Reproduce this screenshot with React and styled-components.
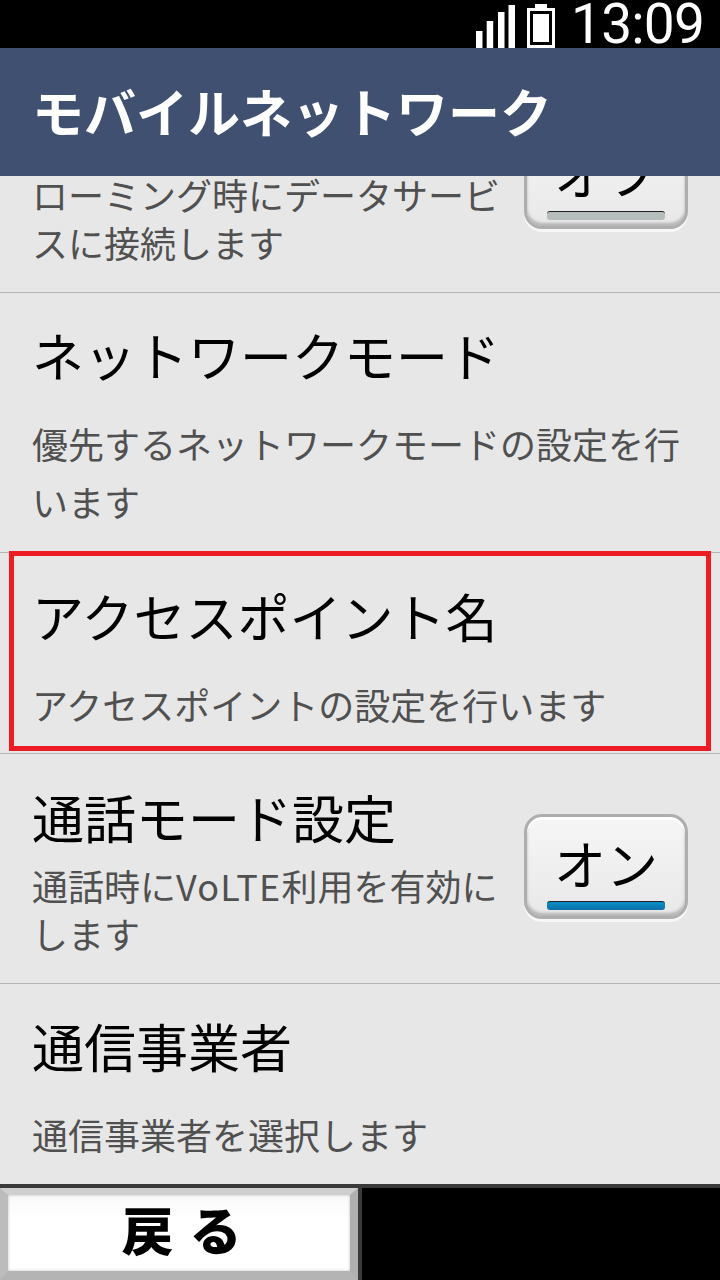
import React from "react";
import styled, { createGlobalStyle } from "styled-components";

const Global = createGlobalStyle`
  html, body { margin: 0; padding: 0; background: #000; }
  body { font-family: "Noto Sans CJK JP", "Noto Sans", sans-serif; }
`;
const Screen = styled.div`
  width: 720px; height: 1280px; display: flex; flex-direction: column; overflow: hidden; background: #e7e7e7;
`;
const StatusBar = styled.div`
  height: 48px; flex: none; background: #000; color: #fff; display: flex; align-items: center; justify-content: flex-end; padding-right: 16px;
`;
const Clock = styled.span`
  font-family: Roboto, "Liberation Sans", sans-serif; font-size: 55px; line-height: 48px; letter-spacing: -0.8px; font-weight: 400; margin-left: 16px;
`;
const Header = styled.header`
  height: 128px; flex: none; box-sizing: border-box; background: #3f5070; color: #fff; display: flex; align-items: center; padding: 0 0 4px 32px; font-size: 52px; font-weight: 700; position: relative; z-index: 2;
`;
const List = styled.div`
  flex: 1; overflow: hidden; min-height: 0;
`;
const Row = styled.div`
  position: relative; box-sizing: border-box; height: ${p => p.$h}px; margin-top: ${p => p.$mt || 0}px; padding: ${p => p.$pt || 0}px 32px 0 32px; border-bottom: 1px solid #b4b4b4;
  display: flex; justify-content: space-between;
  ${p => p.$marked ? `&::after { content: ""; position: absolute; left: 9px; top: -2px; width: 702px; height: 200px; border: 5px solid #ed1c24; box-sizing: border-box; }` : ""}
`;
const TextCol = styled.div`
  display: flex; flex-direction: column; min-width: 0; flex: 1;
`;
const Title = styled.div`
  font-size: 52px; line-height: ${p => p.$lh}px; color: #000; white-space: nowrap;
`;
const Sub = styled.div`
  font-size: 36px; line-height: ${p => p.$lh}px; color: #505050; margin-top: ${p => p.$mt || 0}px; width: ${p => p.$w || 660}px;
`;
const Latin = styled.span`
  letter-spacing: 1.2px;
`;
const Toggle = styled.div`
  flex: none; box-sizing: border-box; width: 164px; height: 105px; margin-top: ${p => p.$mt}px; border-radius: 18px; border: 3px solid #aeaeae;
  background: linear-gradient(#f6f6f6, #e8e8e8); box-shadow: inset 0 3px 0 #fff, inset 0 -3px 3px #b4b4b4, 0 3px 0 #f7f7f7;
  display: flex; flex-direction: column; align-items: center; font-size: 52px; line-height: 92px; color: #000; position: relative;
`;
const ToggleBar = styled.div`
  position: absolute; left: 20px; right: 20px; bottom: 6px; height: 8px; border-radius: 3px; border-top: 1px solid #222;
  background: ${p => p.$on ? "linear-gradient(#0a8fc8,#0d6fa8)" : "#b5bebc"};
`;
const Footer = styled.div`
  height: 96px; flex: none; background: #000; border-top: 4px solid #3a3a3a; box-sizing: border-box; display: flex;
`;
const BackSlot = styled.div`
  width: 362px; box-sizing: border-box; border-right: 4px solid #3a3a3a; display: flex;
`;
const BackButton = styled.div`
  flex: 1; box-sizing: border-box; background: linear-gradient(#f9f9f9, #fff 30%); border-style: solid; border-color: #cfcfcf #b0b0b0 #b4b4b4 #bcbcbc; border-width: 7px 8px 9px 8px;
  box-shadow: inset 0 0 3px #bbb; display: flex; align-items: center; justify-content: center; padding: 0 0 8px 7px; font-size: 52px; font-weight: 900; color: #000; letter-spacing: 2px; line-height: 1; white-space: pre;
`;
const Signal = () => (
  <svg width="39" height="44" viewBox="0 0 39 44" fill="#fff" style={{ marginTop: 3 }}>
    <rect x="0" y="27" width="6.5" height="17" />
    <rect x="10.7" y="17" width="6.5" height="27" />
    <rect x="22" y="8" width="6.5" height="36" />
    <rect x="32.5" y="1" width="6.5" height="43" />
  </svg>
);
const Battery = () => (
  <svg width="28" height="44" viewBox="0 0 28 44" fill="none" style={{ marginTop: 3, marginLeft: 12 }}>
    <rect x="8" y="0" width="12" height="5" fill="#fff" />
    <rect x="1.5" y="5.5" width="25" height="37" stroke="#fff" strokeWidth="3" />
    <rect x="6" y="10" width="16" height="28" fill="#fff" />
  </svg>
);

export default function App() {
  return (
    <Screen>
      <Global />
      <StatusBar><Signal /><Battery /><Clock>13:09</Clock></StatusBar>
      <Header>モバイルネットワーク</Header>
      <List>
        <Row $h={250} $mt={-133} $pt={53}>
          <TextCol>
            <Title $lh={72}>データローミング</Title>
            <Sub $lh={48} $w={470} $mt={2}>ローミング時にデータサービスに接続します</Sub>
          </TextCol>
          <Toggle $mt={28}>オフ<ToggleBar /></Toggle>
        </Row>
        <Row $h={260} $pt={23}>
          <TextCol>
            <Title $lh={78}>ネットワークモード</Title>
            <Sub $lh={58} $mt={20}>優先するネットワークモードの設定を行います</Sub>
          </TextCol>
        </Row>
        <Row $h={201} $pt={24} $marked>
          <TextCol>
            <Title $lh={78}>アクセスポイント名</Title>
            <Sub $lh={58} $mt={20}>アクセスポイントの設定を行います</Sub>
          </TextCol>
        </Row>
        <Row $h={230} $pt={24}>
          <TextCol>
            <Title $lh={78}>通話モード設定</Title>
            <Sub $lh={48} $w={470} $mt={5}>通話時に<Latin>VoLTE</Latin>利用を有効にします</Sub>
          </TextCol>
          <Toggle $mt={36}>オン<ToggleBar $on /></Toggle>
        </Row>
        <Row $h={201} $pt={23}>
          <TextCol>
            <Title $lh={78}>通信事業者</Title>
            <Sub $lh={58} $mt={20}>通信事業者を選択します</Sub>
          </TextCol>
        </Row>
      </List>
      <Footer><BackSlot><BackButton>戻 る</BackButton></BackSlot></Footer>
    </Screen>
  );
}
